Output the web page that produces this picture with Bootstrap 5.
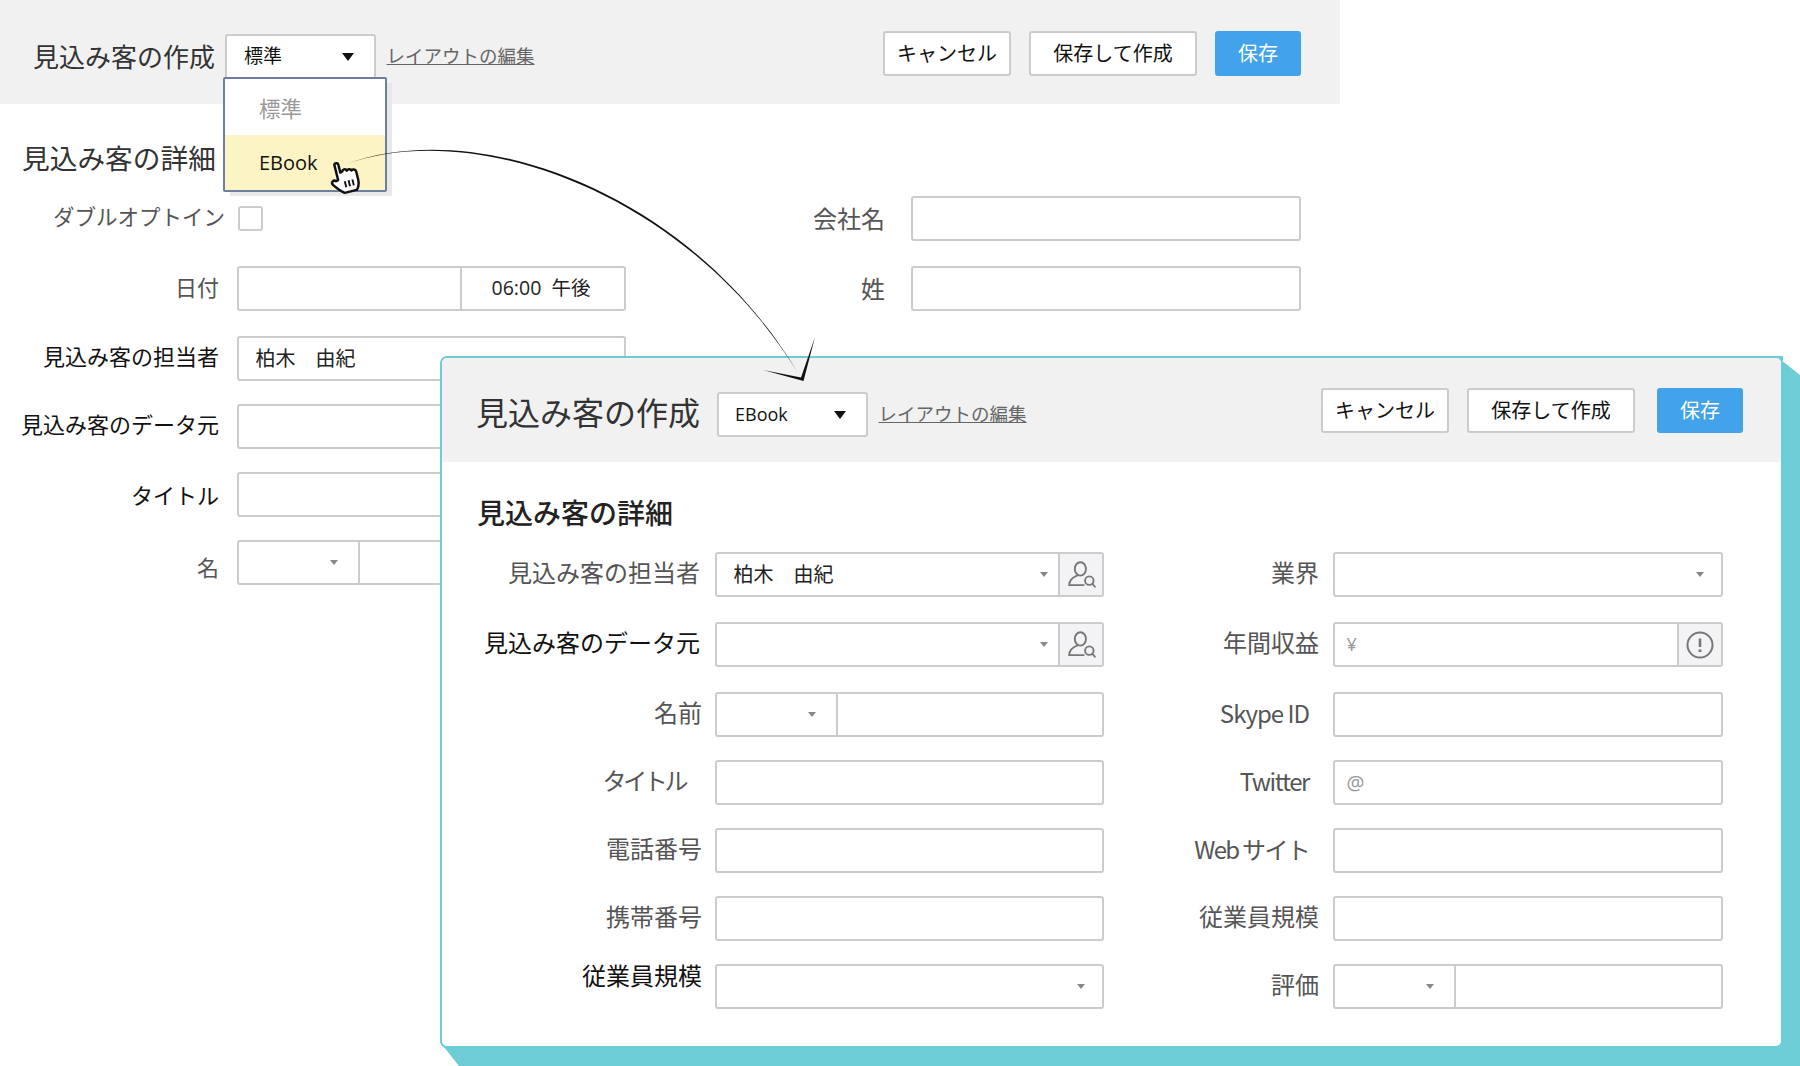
<!DOCTYPE html>
<html lang="ja">
<head>
<meta charset="utf-8">
<title>見込み客の作成</title>
<link href="https://cdn.jsdelivr.net/npm/bootstrap@5.3.0/dist/css/bootstrap.min.css" rel="stylesheet">
<style>
html,body{margin:0;width:1800px;height:1066px;overflow:hidden;background:#fff}
body{position:relative;font-family:"Open Sans","Noto Sans CJK JP",sans-serif;color:#333}
.lay-back{width:1340px}
.wz-head{height:104px;background:#f1f1f1;padding-top:9px}
.wz-title{font-size:26px;line-height:40px;color:#333;white-space:nowrap}
.wz-pick{width:151px;height:45px;background:#fff;border:2px solid #ccc;border-radius:3px;font-size:19px;color:#111;padding:0 20px 0 17px}
.wz-link{font-size:18.5px;color:#666;text-decoration:underline;margin:0 0 2px 10.5px}
.caret-lg{width:0;height:0;border-left:6.5px solid transparent;border-right:6.5px solid transparent;border-top:8px solid #111}
.caret-sm{display:block;width:0;height:0;border-left:4px solid transparent;border-right:4px solid transparent;border-top:5px solid #888}
.btn.act{height:45px;padding:0;border:2px solid #ccc;background:#fff;border-radius:3px;font-size:20px;color:#111;line-height:1}
.btn.act-main{background:#42a3ea;border-color:#42a3ea;color:#fff;width:86px}
.w-a{width:128px}.w-b{width:168px}
.acts{margin-bottom:6px;gap:18px}
.head-back{padding-left:33px;padding-right:39px}
.head-back .wz-pick{margin-left:10px}
.sec-title{font-size:27.7px;line-height:40px;margin:0 0 19px;color:#333;font-weight:400}
.back-body{padding:34px 0 0 22px}
.back-body .sec-title{margin-bottom:18px}
.stack{display:flex;flex-direction:column;gap:25px}
.stack>.tight{margin-top:-2px}
.fld{min-height:45px}
.lab{font-size:22px;color:#555;text-align:right;white-space:nowrap;flex:none}
.lab.ink{color:#111}
.form-control.box{height:45px;padding:0;border:2px solid #ccc;border-radius:3px;background:#fff;display:flex;align-items:center;font-size:20px;color:#222;box-shadow:none;overflow:hidden}
.box .val{padding-left:17px;white-space:pre}
.box .hint{padding-left:12px;color:#999;font-size:18px}
.box .hint.big{font-size:20px}
.box .part{flex:none;height:100%;border-right:2px solid #ccc;display:flex;align-items:center;justify-content:flex-end;padding-right:20px}
.box .side{flex:none;width:44px;height:100%;background:#f3f3f5;border-left:2px solid #ccc;display:flex;align-items:center;justify-content:center}
.box>.caret-sm{margin-left:auto}
.box .cr-10{margin-right:10px}
.box .cr-17{margin-right:17px}
.box .auto{margin-left:auto}
.box svg{display:block}
.part.w120{width:121px}
.back-left{width:626px;margin-left:-22px}
.back-left .lab{width:219px;padding-bottom:2px}
.back-left .lab.up{padding-bottom:4px}
.back-left .box{width:390px;margin-left:17.5px}
.back-right .lab{width:259px;font-size:24px}
.back-right .box{width:390px;margin-left:26px}
.chk.form-check-input{width:25px;height:25px;margin:0 0 0 12.5px;border:2px solid #ccc;border-radius:3px;box-shadow:none}
.back-left .lab.wide{width:225px;font-size:21.5px}
.back-left .lab.dip{padding:2px 0 0}
.back-left .lab.sink{padding:9px 0 0}
.tm{width:164px;text-align:center;font-size:19.5px;color:#222;white-space:pre;flex:none;border-left:2px solid #ccc;height:100%;line-height:39px;padding-right:4px;margin-left:auto}
.pane{position:absolute;left:440px;top:356px;width:1343px;height:692px;background:#fff;border:2px solid #6dcdd7;border-radius:7px;z-index:2}
.pane-deep{position:absolute;left:440px;top:356px;width:1360px;height:710px;background:#6dcdd7;clip-path:polygon(1336px 0,1360px 19px,1360px 710px,19px 710px,0 686px,0 680px,1343px 680px,1343px 0);z-index:1}
.head-front{padding-left:34px;padding-right:38px;border-radius:5px 5px 0 0}
.head-front .wz-title{font-size:32px;margin-bottom:4px}
.head-front .wz-pick{margin-left:17px;font-size:18px;padding-left:16px}
.head-front .acts{margin-bottom:8px}
.head-front .btn.w-b{margin-right:4px}
.front-body{padding:31px 0 0 35px}
.front-body .sec-title{font-weight:500;color:#222;margin-bottom:19px;font-size:28px}
.front-body .lab{font-size:24px;padding-bottom:3px}
.front-left{width:662px;margin-left:-35px}
.front-left .lab{width:258px}
.front-left .box{width:390.500px;margin-left:14.500px}
.front-left .lab.out2{width:260px}
.front-left .lab.out2+.box{margin-left:12.500px}
.front-left .lab.in10{width:243px;letter-spacing:-3.400px}
.front-left .lab.in10+.box{margin-left:29.500px}
.front-left .lab.lift{align-self:flex-start;margin-top:-6px;padding-bottom:0}
.front-right .lab{width:215px}
.front-right .box{width:390.500px;margin-left:13.500px}
.front-right .lab.in8{width:205px;font-family:"Noto Sans CJK JP",sans-serif}
.front-right .lab.in8+.box{margin-left:23.500px}
.front-right .lab.ls-a{letter-spacing:-1px}
.front-right .lab.ls-b{letter-spacing:-1.400px}
.front-right .lab.ls-c{letter-spacing:-1.700px}
.pick-menu.dropdown-menu{display:block;position:absolute;left:223px;top:77px;width:164px;height:115px;min-width:0;padding:0;margin:0;border:2px solid #6d7f9e;border-radius:2px;box-shadow:6px 5px 0 -1px #e8e8e8;background:#fff;z-index:3;overflow:hidden}
.pick-menu .dropdown-item{height:56px;padding:4px 0 0 34px;font-size:21.5px;display:flex;align-items:center;color:#999;background:transparent}
.pick-menu .dropdown-item.on{background:#fdf4c5;color:#111;height:55px;font-size:20px;padding-top:0}
.over-art{position:absolute;left:0;top:0;width:1800px;height:1066px;pointer-events:none;z-index:4}
</style>
</head>
<body>

<div class="lay-back">
  <div class="wz-head head-back d-flex align-items-center">
    <div class="wz-title">見込み客の作成</div>
    <div class="wz-pick d-flex align-items-center justify-content-between"><span>標準</span><i class="caret-lg"></i></div>
    <a class="wz-link" href="#">レイアウトの編集</a>
    <div class="acts ms-auto d-flex">
      <button class="btn act w-a">キャンセル</button>
      <button class="btn act w-b">保存して作成</button>
      <button class="btn act act-main">保存</button>
    </div>
  </div>
  <div class="back-body">
    <h2 class="sec-title">見込み客の詳細</h2>
    <div class="d-flex">
      <div class="back-left stack">
        <div class="d-flex align-items-center fld"><div class="lab wide">ダブルオプトイン</div><input type="checkbox" class="form-check-input chk"></div>
        <div class="d-flex align-items-center fld"><div class="lab">日付</div><div class="form-control box"><div class="tm">06:00  午後</div></div></div>
        <div class="d-flex align-items-center fld"><div class="lab ink up">見込み客の担当者</div><div class="form-control box"><span class="val">柏木　由紀</span></div></div>
        <div class="d-flex align-items-center fld tight"><div class="lab ink up">見込み客のデータ元</div><div class="form-control box"></div></div>
        <div class="d-flex align-items-center fld tight"><div class="lab ink dip">タイトル</div><div class="form-control box"></div></div>
        <div class="d-flex align-items-center fld tight"><div class="lab sink">名</div><div class="form-control box"><div class="part w120"><i class="caret-sm"></i></div></div></div>
      </div>
      <div class="back-right stack">
        <div class="d-flex align-items-center fld"><div class="lab">会社名</div><div class="form-control box"></div></div>
        <div class="d-flex align-items-center fld"><div class="lab">姓</div><div class="form-control box"></div></div>
      </div>
    </div>
  </div>
</div>

<div class="pane-deep"></div>
<div class="pane">
  <div class="wz-head head-front d-flex align-items-center">
    <div class="wz-title">見込み客の作成</div>
    <div class="wz-pick d-flex align-items-center justify-content-between"><span>EBook</span><i class="caret-lg"></i></div>
    <a class="wz-link" href="#">レイアウトの編集</a>
    <div class="acts ms-auto d-flex">
      <button class="btn act w-a">キャンセル</button>
      <button class="btn act w-b">保存して作成</button>
      <button class="btn act act-main">保存</button>
    </div>
  </div>
  <div class="front-body">
    <h2 class="sec-title">見込み客の詳細</h2>
    <div class="d-flex">
      <div class="front-left stack">
        <div class="d-flex align-items-center fld"><div class="lab">見込み客の担当者</div><div class="form-control box"><span class="val">柏木　由紀</span><i class="caret-sm auto cr-10"></i><div class="side"><svg width="29" height="27" viewBox="0 0 26 24" fill="none" stroke="#777" stroke-width="1.700" stroke-linecap="round"><ellipse cx="12" cy="7" rx="5" ry="6"/><path d="M9 13C4 15 2 18 2 21.500H15"/><circle cx="20" cy="17.500" r="3.800"/><path d="M22.800 20.300L25 23"/></svg></div></div></div>
        <div class="d-flex align-items-center fld"><div class="lab ink">見込み客のデータ元</div><div class="form-control box"><i class="caret-sm auto cr-10"></i><div class="side"><svg width="29" height="27" viewBox="0 0 26 24" fill="none" stroke="#777" stroke-width="1.700" stroke-linecap="round"><ellipse cx="12" cy="7" rx="5" ry="6"/><path d="M9 13C4 15 2 18 2 21.500H15"/><circle cx="20" cy="17.500" r="3.800"/><path d="M22.800 20.300L25 23"/></svg></div></div></div>
        <div class="d-flex align-items-center fld"><div class="lab out2">名前</div><div class="form-control box"><div class="part w120"><i class="caret-sm"></i></div></div></div>
        <div class="d-flex align-items-center fld tight"><div class="lab in10">タイトル</div><div class="form-control box"></div></div>
        <div class="d-flex align-items-center fld tight"><div class="lab out2">電話番号</div><div class="form-control box"></div></div>
        <div class="d-flex align-items-center fld tight"><div class="lab out2">携帯番号</div><div class="form-control box"></div></div>
        <div class="d-flex align-items-center fld tight"><div class="lab ink out2 lift">従業員規模</div><div class="form-control box"><i class="caret-sm cr-17"></i></div></div>
      </div>
      <div class="front-right stack">
        <div class="d-flex align-items-center fld"><div class="lab">業界</div><div class="form-control box"><i class="caret-sm cr-17"></i></div></div>
        <div class="d-flex align-items-center fld"><div class="lab">年間収益</div><div class="form-control box"><span class="hint">¥</span><div class="side auto"><svg width="28" height="28" viewBox="0 0 28 28" fill="none" stroke="#777" stroke-width="2"><circle cx="14" cy="14" r="12.500"/><path d="M14 7.500V16" stroke-width="2.600"/><path d="M14 18.500V21" stroke-width="2.800"/></svg></div></div></div>
        <div class="d-flex align-items-center fld"><div class="lab in8 ls-a">Skype ID</div><div class="form-control box"></div></div>
        <div class="d-flex align-items-center fld tight"><div class="lab in8 ls-b">Twitter</div><div class="form-control box"><span class="hint big">@</span></div></div>
        <div class="d-flex align-items-center fld tight"><div class="lab in8 ls-c">Web サイト</div><div class="form-control box"></div></div>
        <div class="d-flex align-items-center fld tight"><div class="lab">従業員規模</div><div class="form-control box"></div></div>
        <div class="d-flex align-items-center fld tight"><div class="lab">評価</div><div class="form-control box"><div class="part w120"><i class="caret-sm"></i></div></div></div>
      </div>
    </div>
  </div>
</div>

<div class="dropdown-menu pick-menu">
  <a class="dropdown-item" href="#">標準</a>
  <a class="dropdown-item on" href="#">EBook</a>
</div>

<svg class="over-art" viewBox="0 0 1800 1066">
  <path d="M346 164C480 115 691 194 798 373C690 196.500 479 117 346 164Z" fill="#111"/>
  <path d="M763 370L803.500 381L815 337L801 377.500Z" fill="#111"/>
  <g transform="translate(327 157) scale(1.120) rotate(-14 16 16)">
    <path d="M9 19V5.500C9 3.500 12.500 3.500 12.500 5.500V13L14.500 12.500C15 10.500 18 10.500 18.500 12.700C19.500 11.500 22 11.500 22.500 13.500C23.500 12.700 26.500 13 26.500 15.500V23C26.500 27 24.500 30.500 23 31.500H12C10 30 7 27 3.500 22C2 19.500 5 17.500 7 19.500Z" fill="#fff" stroke="#111" stroke-width="2.200" stroke-linejoin="round"/>
    <path d="M14.500 21.500V27M18 21.500V27M21.500 21.500V27" stroke="#111" stroke-width="1.700"/>
  </g>
</svg>

<script src="https://cdn.jsdelivr.net/npm/bootstrap@5.3.0/dist/js/bootstrap.bundle.min.js"></script>
</body>
</html>
